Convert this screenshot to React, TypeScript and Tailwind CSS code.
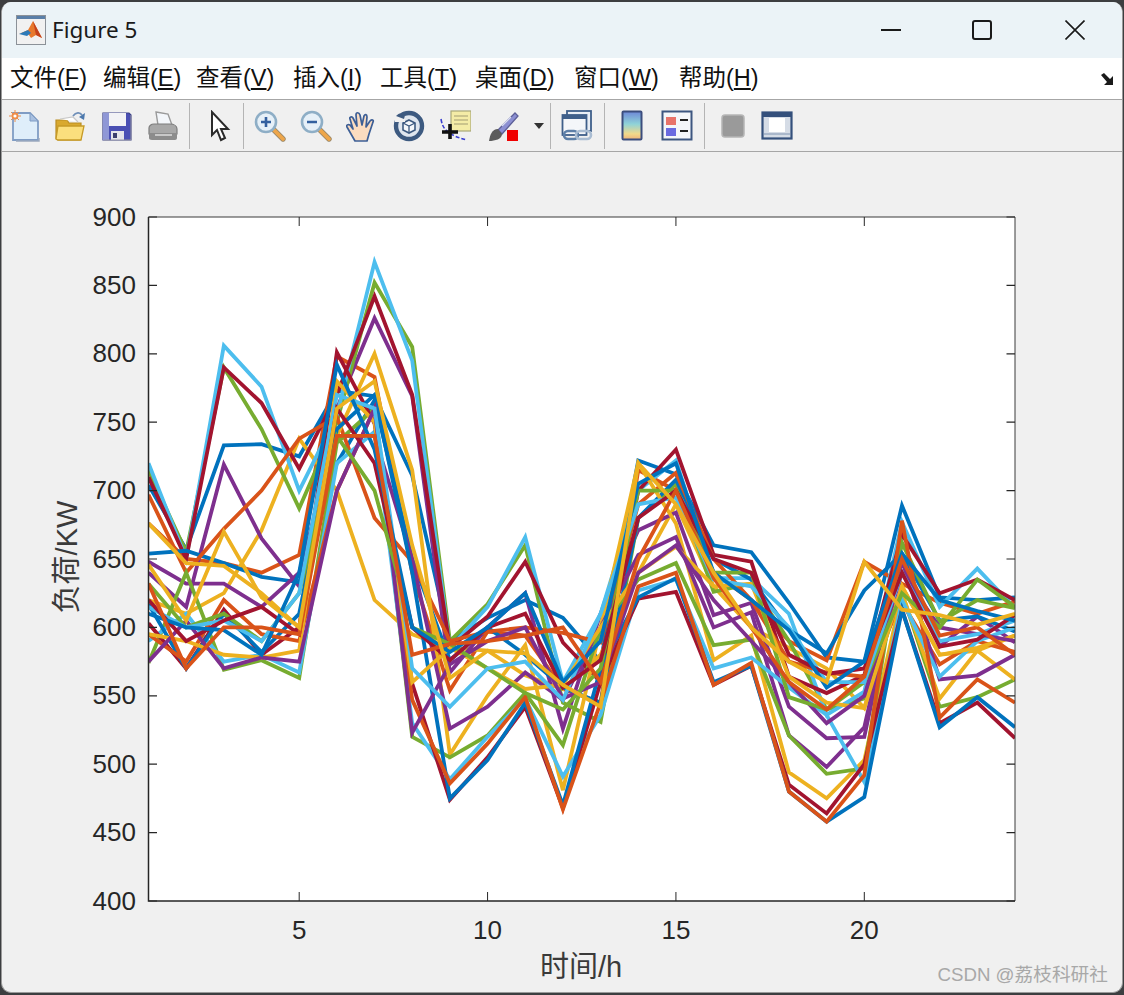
import React from 'react';

const uiFont = "font-['Liberation_Sans','Noto_Sans_CJK_SC',sans-serif]";

const colors = ['#0072BD', '#D95319', '#EDB120', '#7E2F8E', '#77AC30', '#4DBEEE', '#A2142F'];

// one row per curve, 24 hourly values in KW
const series: number[][] = [
  [704, 657, 733, 734, 725, 773, 769, 711, 590, 607, 620, 607, 575, 722, 712, 660, 655, 618, 578, 575, 689, 622, 620, 622],
  [676, 650, 647, 640, 653, 798, 783, 640, 554, 597, 594, 555, 545, 715, 700, 640, 620, 590, 576, 648, 632, 618, 610, 619],
  [620, 610, 625, 671, 738, 700, 620, 595, 585, 583, 565, 555, 580, 640, 690, 630, 600, 585, 570, 541, 630, 580, 583, 594],
  [640, 615, 719, 665, 630, 760, 826, 769, 567, 600, 625, 526, 610, 671, 684, 609, 618, 542, 519, 520, 650, 586, 608, 589],
  [715, 655, 790, 745, 687, 750, 852, 805, 590, 617, 660, 545, 531, 680, 705, 626, 632, 590, 540, 548, 625, 542, 549, 562],
  [720, 650, 806, 776, 700, 755, 867, 795, 585, 615, 666, 560, 610, 700, 722, 636, 636, 610, 536, 553, 677, 615, 643, 614],
  [710, 650, 790, 764, 716, 770, 842, 770, 585, 608, 648, 589, 560, 700, 730, 653, 648, 564, 552, 565, 668, 625, 635, 620],
  [654, 656, 647, 637, 633, 720, 766, 650, 576, 600, 580, 556, 545, 680, 708, 650, 635, 598, 581, 627, 654, 605, 608, 597],
  [697, 640, 672, 700, 738, 754, 680, 648, 590, 597, 600, 596, 589, 690, 713, 650, 620, 575, 567, 564, 618, 573, 590, 582],
  [676, 647, 645, 625, 600, 740, 800, 715, 507, 550, 587, 481, 600, 720, 676, 576, 594, 494, 475, 503, 625, 548, 583, 562],
  [648, 632, 632, 615, 640, 740, 740, 650, 526, 542, 567, 547, 600, 653, 666, 600, 611, 521, 498, 527, 649, 562, 565, 580],
  [574, 640, 569, 576, 563, 735, 760, 520, 505, 521, 552, 514, 600, 635, 647, 587, 591, 521, 493, 497, 662, 604, 620, 614],
  [590, 610, 575, 580, 567, 720, 743, 530, 489, 520, 548, 491, 536, 627, 635, 570, 578, 556, 536, 487, 620, 564, 590, 600],
  [603, 570, 613, 580, 600, 801, 749, 559, 474, 505, 542, 468, 560, 621, 626, 558, 572, 485, 464, 500, 613, 530, 545, 519],
  [617, 570, 610, 582, 610, 745, 770, 640, 475, 503, 545, 470, 570, 622, 636, 560, 572, 480, 458, 476, 613, 527, 549, 527],
  [595, 575, 620, 595, 590, 700, 760, 547, 486, 515, 549, 467, 545, 630, 640, 558, 574, 480, 458, 492, 678, 534, 562, 545],
  [595, 590, 580, 578, 583, 780, 750, 560, 585, 570, 555, 558, 600, 640, 659, 630, 632, 564, 545, 541, 630, 580, 585, 594],
  [575, 605, 570, 578, 575, 700, 760, 523, 573, 590, 600, 548, 560, 640, 660, 620, 590, 560, 530, 550, 640, 600, 595, 590],
  [632, 600, 610, 590, 625, 740, 700, 600, 588, 570, 552, 540, 570, 700, 700, 640, 640, 549, 540, 560, 625, 600, 635, 615],
  [615, 600, 605, 590, 625, 770, 760, 570, 542, 570, 575, 547, 610, 690, 695, 635, 630, 600, 560, 560, 640, 590, 595, 605],
  [620, 590, 605, 615, 595, 760, 720, 600, 576, 600, 610, 556, 576, 680, 700, 650, 640, 580, 566, 570, 640, 586, 591, 609],
  [610, 600, 598, 580, 640, 792, 730, 600, 582, 600, 625, 560, 590, 705, 720, 640, 620, 598, 556, 575, 654, 620, 612, 605],
  [632, 570, 600, 600, 595, 740, 740, 580, 588, 590, 594, 600, 560, 650, 700, 636, 600, 560, 540, 564, 650, 594, 600, 580],
  [646, 605, 670, 622, 600, 760, 780, 660, 563, 583, 581, 558, 542, 720, 690, 640, 600, 575, 560, 648, 613, 609, 602, 610],
];

const menus = [
  { a: '文件(', k: 'F', w: 'w-[93px]' },
  { a: '编辑(', k: 'E', w: 'w-[93px]' },
  { a: '查看(', k: 'V', w: 'w-[97px]' },
  { a: '插入(', k: 'I', w: 'w-[87px]' },
  { a: '工具(', k: 'T', w: 'w-[95px]' },
  { a: '桌面(', k: 'D', w: 'w-[99px]' },
  { a: '窗口(', k: 'W', w: 'w-[105px]' },
  { a: '帮助(', k: 'H', w: 'w-[90px]' },
];

const left = 148.5;
const right = 1015;
const top = 217;
const bottom = 901;
const px = (h: number) => left + ((h - 1) * (right - left)) / 23;
const py = (kw: number) => bottom - ((kw - 400) * (bottom - top)) / 500;

function Icon({ className, children }: { className: string; children: React.ReactNode }) {
  return (
    <svg viewBox="0 0 32 32" className={`h-8 w-8 shrink-0 ${className}`}>
      {children}
    </svg>
  );
}

function Sep({ className }: { className: string }) {
  return <div className={`h-[46px] w-px shrink-0 bg-[#b4b4b4] ${className}`} />;
}

function Toolbar() {
  return (
    <div className="flex h-[52px] items-center border-b border-[#a6a6a6] bg-[#f0f0f0] pl-[7px]">
      <Icon className="">
        <path d="M4 3h17l8 8v19H4z" fill="#dfeefa" stroke="#7f9cc4" strokeWidth="1.8" />
        <path d="M21 3v8h8z" fill="#a9c0e0" stroke="#7f9cc4" strokeWidth="1" />
        <path d="M30 28v3H7" fill="none" stroke="#9aa8bd" strokeWidth="1.4" />
        <circle cx="6" cy="6" r="3.4" fill="#ef8d4a" />
        <path d="M6 0v12M0 6h12M2 2l8 8M10 2l-8 8" stroke="#ef8d4a" strokeWidth="1" />
        <circle cx="6" cy="6" r="1.6" fill="#fff" />
      </Icon>
      <Icon className="ml-[13px]">
        <path d="M2 10h11l2 3h12v15a2 2 0 0 1-2 2H4a2 2 0 0 1-2-2z" fill="#d9a92f" stroke="#b98d22" strokeWidth="1.2" />
        <path d="M6 9l13-2 5 5" fill="#fff" stroke="#c9c9c9" strokeWidth="1.2" />
        <path d="M2 29l2-13h26l-3 14H4z" fill="#fbdf7d" stroke="#c69a27" strokeWidth="1.3" />
        <path d="M19 6c3-4 7-4 9-1" fill="none" stroke="#6f8fb8" strokeWidth="1.8" />
        <path d="M31 3l-1 7-5-3z" fill="#4d79ad" />
      </Icon>
      <Icon className="ml-[15px]">
        <path d="M2 3h26l2 2v25H2z" fill="#4a4fb4" stroke="#3b4189" strokeWidth="1.2" />
        <path d="M2 3h6v27H2z" fill="#8f97d6" />
        <rect x="8" y="3" width="17" height="13" fill="#f2f2f6" />
        <rect x="10" y="21" width="13" height="9" fill="#e4e4ea" />
        <rect x="12" y="23" width="4" height="5" fill="#3b3f6e" />
        <path d="M30 5v25H3" fill="none" stroke="#99a" strokeWidth="1" />
      </Icon>
      <Icon className="ml-[14px]">
        <path d="M9 2l12 2 4 11H11z" fill="#f3f6fa" stroke="#9a9a9a" strokeWidth="1.4" />
        <path d="M2 18c0-2 2-4 5-4h16c4 0 7 2 7 5v5H2z" fill="#a8a8a8" stroke="#7c7c7c" strokeWidth="1.2" />
        <path d="M2 23h28v5c0 1-1 2-2 2H5c-2 0-3-1-3-2z" fill="#8c8c8c" />
        <path d="M8 25h17" stroke="#dcdcdc" strokeWidth="1.6" />
      </Icon>
      <Sep className="ml-[10px]" />
      <Icon className="ml-[14px]">
        <path d="M8 2v23l5-5 4 10 4-2-4-9h7z" fill="#fff" stroke="#2b2b2b" strokeWidth="2" strokeLinejoin="miter" />
      </Icon>
      <Sep className="ml-[7px]" />
      <Icon className="ml-[10px]">
        <path d="M19 19l10 10" stroke="#9c8a6a" strokeWidth="5.4" strokeLinecap="round" />
        <path d="M19 19l10 10" stroke="#eea64a" strokeWidth="3.8" strokeLinecap="round" />
        <circle cx="12" cy="12" r="10" fill="#e6f0f8" stroke="#8eaec6" strokeWidth="2.6" />
        <path d="M7 12h10M12 7v10" stroke="#33609f" strokeWidth="2.6" />
      </Icon>
      <Icon className="ml-[14px]">
        <path d="M19 19l10 10" stroke="#9c8a6a" strokeWidth="5.4" strokeLinecap="round" />
        <path d="M19 19l10 10" stroke="#eea64a" strokeWidth="3.8" strokeLinecap="round" />
        <circle cx="12" cy="12" r="10" fill="#e6f0f8" stroke="#8eaec6" strokeWidth="2.6" />
        <path d="M7 12h10" stroke="#33609f" strokeWidth="2.6" />
      </Icon>
      <Icon className="ml-[14px]">
        <path
          d="M9 31L1 17c-1-2 1-3 3-2l3 4-3-10c-1-2 2-3 3-1l4 8-1-11c0-3 3-3 4 0l2 10 2-9c1-2 3-2 3 1l-1 10 4-6c2-2 4-1 3 1l-4 12-2 7z"
          fill="#fbdcc0"
          stroke="#3d5f96"
          strokeWidth="1.7"
          strokeLinejoin="round"
        />
      </Icon>
      <Icon className="ml-[15px]">
        <circle cx="16" cy="16" r="13" fill="#dfe6ee" stroke="#3d5a80" strokeWidth="4.4" />
        <path d="M16 10l6 3v7l-6 3-6-3v-7z" fill="#f4f7fa" stroke="#3d5a80" strokeWidth="1.6" />
        <path d="M10 13l6 3 6-3M16 16v7" fill="none" stroke="#3d5a80" strokeWidth="1.3" />
        <path d="M2 3h10v9H2z" fill="#f0f0f0" />
        <path d="M3 6c3-3 7-4 10-4l-2 7z" fill="#3d5a80" />
      </Icon>
      <Icon className="ml-[14px]">
        <path d="M2 9c1 6 3 10 7 13s10 6 19 8" fill="none" stroke="#3a3fd0" strokeWidth="1.6" strokeDasharray="4 2" />
        <rect x="12" y="1" width="20" height="20" fill="#f4eca6" stroke="#a8a878" strokeWidth="1.2" />
        <path d="M15 6h14M15 10h14M15 14h14" stroke="#bdb784" strokeWidth="1.4" />
        <path d="M11 14v15M3 22h16" stroke="#111" strokeWidth="3.6" />
      </Icon>
      <Icon className="ml-[16px]">
        <path d="M11 20L28 3l3 3-16 18z" fill="#8c8fd2" stroke="#5d6098" strokeWidth="1.3" />
        <path d="M15 16l9-9" stroke="#d8dbf2" strokeWidth="1.4" />
        <path d="M2 31c1-6 3-12 9-12l4 5c0 5-7 7-13 7z" fill="#5c5c5c" />
        <rect x="20" y="20" width="11" height="11" fill="#f00000" />
      </Icon>
      <svg viewBox="0 0 10 6" className="ml-[15px] h-[6px] w-[10px] shrink-0">
        <path d="M0 0h10L5 6z" fill="#333" />
      </svg>
      <Sep className="ml-[6px]" />
      <Icon className="ml-[10px]">
        <rect x="6" y="1" width="24" height="20" fill="#e9eef5" stroke="#3f5f8a" strokeWidth="1.8" />
        <rect x="1.5" y="5" width="24" height="20" fill="#f4f6f9" stroke="#3f5f8a" strokeWidth="1.8" />
        <path d="M1.5 5h24v4h-24z" fill="#3f5f8a" />
        <rect x="3" y="21" width="14" height="8" rx="4" fill="none" stroke="#5d7fa8" strokeWidth="2.6" />
        <rect x="15" y="21" width="15" height="8" rx="4" fill="none" stroke="#a9bcd2" strokeWidth="2.6" />
      </Icon>
      <Sep className="ml-[11px]" />
      <svg viewBox="0 0 22 32" className="ml-[16px] h-8 w-[22px] shrink-0">
        <defs>
          <linearGradient id="cbar" x1="0" y1="0" x2="0" y2="1">
            <stop offset="0" stopColor="#6d87d8" />
            <stop offset="0.45" stopColor="#8fd3d8" />
            <stop offset="0.8" stopColor="#f2d98a" />
            <stop offset="1" stopColor="#eeb27a" />
          </linearGradient>
        </defs>
        <rect x="1.5" y="1.5" width="19" height="28" rx="1" fill="url(#cbar)" stroke="#3b4d7d" strokeWidth="2" />
      </svg>
      <Icon className="ml-[18px]">
        <rect x="1.5" y="1.5" width="29" height="28" fill="#f4f6f9" stroke="#3d5680" strokeWidth="2" />
        <rect x="5" y="7" width="10" height="8" fill="#e8736a" />
        <rect x="5" y="18" width="10" height="8" fill="#6a6ae0" />
        <path d="M19 10h8M19 21h8" stroke="#222" strokeWidth="2" />
      </Icon>
      <Sep className="ml-[11px]" />
      <Icon className="ml-[12px]">
        <rect x="5" y="5" width="22" height="22" rx="3" fill="#9a9a9a" stroke="#b5b5b5" strokeWidth="1.5" />
      </Icon>
      <Icon className="ml-[12px]">
        <rect x="1.5" y="2.5" width="29" height="26" fill="#d5dce6" stroke="#34507c" strokeWidth="2.2" />
        <path d="M1.5 3h29v4h-29z" fill="#34507c" />
        <rect x="8" y="8" width="16" height="14" fill="#fff" />
        <path d="M3 24h26" stroke="#7f93b0" strokeWidth="1" />
      </Icon>
    </div>
  );
}

function Chart() {
  const yTicks = [400, 450, 500, 550, 600, 650, 700, 750, 800, 850, 900];
  const xTicks = [5, 10, 15, 20];
  return (
    <svg viewBox="2 152 1120 839" className="block h-[839px] w-full">
      <rect x={left} y={top} width={right - left} height={bottom - top} fill="#fff" />
      <defs>
        <clipPath id="axes">
          <rect x={left} y={top} width={right - left} height={bottom - top} />
        </clipPath>
      </defs>
      <g clipPath="url(#axes)">
        {series.map((s, i) => (
          <polyline
            key={i}
            points={s.map((v, h) => `${px(h + 1)},${py(v)}`).join(' ')}
            fill="none"
            stroke={colors[i % 7]}
            strokeWidth="3.8"
            strokeLinejoin="miter"
          />
        ))}
      </g>
      <path d={`M${left} ${top}H${right}V${bottom}`} fill="none" stroke="#3a3a3a" strokeWidth="1" />
      <path d={`M${left} ${top}V${bottom}H${right}`} fill="none" stroke="#262626" strokeWidth="1.5" />
      {yTicks.map((t) => (
        <g key={t}>
          <path d={`M${left} ${py(t)}h8.5M${right} ${py(t)}h-8.5`} stroke="#262626" strokeWidth="1.2" />
          <text x="136" y={py(t) + 8.5} textAnchor="end" className={`${uiFont} fill-[#262626] text-[26px]`}>
            {t}
          </text>
        </g>
      ))}
      {xTicks.map((t) => (
        <g key={t}>
          <path d={`M${px(t)} ${bottom}v-9M${px(t)} ${top}v9`} stroke="#262626" strokeWidth="1" />
          <text x={px(t)} y="939" textAnchor="middle" className={`${uiFont} fill-[#262626] text-[26px]`}>
            {t}
          </text>
        </g>
      ))}
      <text x="581" y="977" textAnchor="middle" className={`${uiFont} fill-[#3a3a3a] text-[29px]`}>
        时间/h
      </text>
      <text
        transform="translate(77 557) rotate(-90)"
        textAnchor="middle"
        className={`${uiFont} fill-[#3a3a3a] text-[29px]`}
      >
        负荷/KW
      </text>
      <text x="1108" y="981" textAnchor="end" className={`${uiFont} fill-[#a8a8a8] text-[18.7px]`}>
        CSDN @荔枝科研社
      </text>
    </svg>
  );
}

export default function App() {
  return (
    <div className="h-[995px] w-[1124px] overflow-hidden bg-[#3c3e40] pt-[2px]">
      <div className="mx-[1px] h-[991px] overflow-hidden rounded-[10px] border-x border-b border-[#9a9a9a] bg-[#f0f0f0]">
        <div className="flex h-[56px] items-center bg-[#ebf3f7] pl-[14px]">
          <svg viewBox="0 0 30 30" className="h-[30px] w-[30px] shrink-0">
            <rect x="0.5" y="0.5" width="29" height="29" fill="#f1f1f1" stroke="#8b9198" />
            <rect x="1" y="1" width="28" height="3" fill="#5a7fa8" />
            <path d="M3 19l9-4 5-9 9 17-6-3-5 3-4-6z" fill="#e8792c" />
            <path d="M3 19l9-4 3 3-4 3z" fill="#2d7ab8" />
            <path d="M17 6l9 17-6-3z" fill="#c4421c" />
          </svg>
          <span className="ml-[6px] mt-[1px] font-['Noto_Sans',sans-serif] text-[22.5px] leading-none text-[#1a1a1a]">Figure 5</span>
          <div className="ml-auto flex items-center pr-[37px]">
            <div className="h-[2px] w-[20px] bg-[#1a1a1a]" />
            <div className="ml-[71px] h-[20px] w-[20px] rounded-[3px] border-2 border-[#1a1a1a]" />
            <svg viewBox="0 0 20 20" className="ml-[73px] h-[20px] w-[20px]">
              <path d="M0.5 0.5l19 19M19.5 0.5l-19 19" stroke="#1a1a1a" strokeWidth="1.6" />
            </svg>
          </div>
        </div>
        <div className={`relative flex h-[42px] items-center border-b border-[#a6a6a6] bg-white pl-[8px] pt-[1px] text-[23.5px] leading-none text-[#111] ${uiFont}`}>
          {menus.map((m) => (
            <span key={m.k} className={`whitespace-nowrap ${m.w}`}>
              {m.a}
              <span className="underline underline-offset-2">{m.k}</span>)
            </span>
          ))}
          <svg viewBox="0 0 14 14" className="absolute right-[7px] top-[14px] h-[14px] w-[14px]">
            <path d="M0 3l3-2 6 6 3-3v9H3l3-3z" fill="#1a1a1a" />
          </svg>
        </div>
        <Toolbar />
        <Chart />
      </div>
    </div>
  );
}
